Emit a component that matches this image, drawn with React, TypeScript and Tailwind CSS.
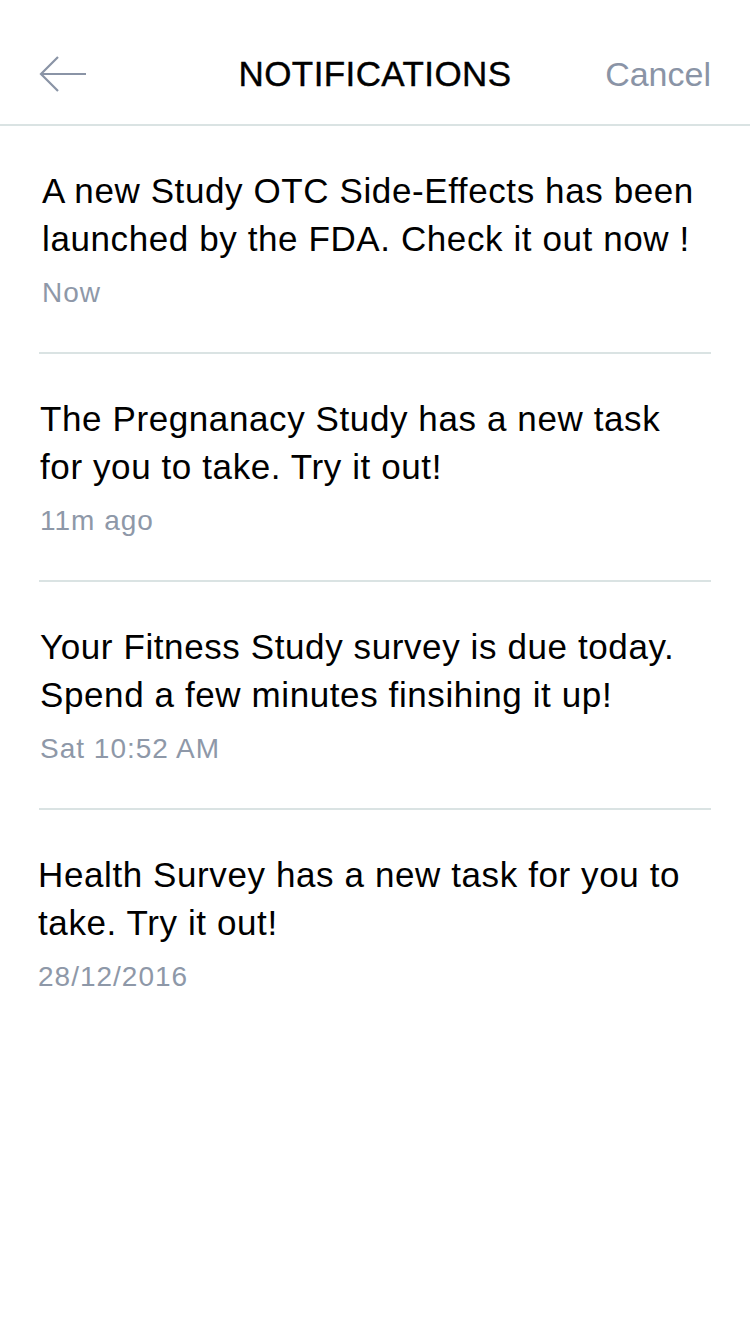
import React from "react";

const items = [
  { text: "A new Study OTC Side-Effects has been launched by the FDA. Check it out now !", time: "Now", pl: "pl-[42px]" },
  { text: "The Pregnanacy Study has a new task for you to take. Try it out!", time: "11m ago", pl: "pl-[40px]" },
  { text: "Your Fitness Study survey is due today. Spend a few minutes finsihing it up!", time: "Sat 10:52 AM", pl: "pl-[40px]" },
  { text: "Health Survey has a new task for you to take. Try it out!", time: "28/12/2016", pl: "pl-[38px]" },
];

export default function App() {
  return (
    <div className="w-[750px] h-[1334px] bg-white" style={{ fontFamily: '"Liberation Sans", Arial, sans-serif' }}>
      <div className="relative h-[126px] border-b-2 border-[#dae3e3] pt-[50px]">
        <div className="flex h-[48px] items-center justify-between px-[39px]">
          <svg width="48" height="38" viewBox="0 0 48 38" fill="none">
            <path d="M47 19H3M19 2L2 19L19 36" stroke="#8a94a6" strokeWidth="2.2" />
          </svg>
          <div className="text-[34px] leading-[48px] text-[#8a94a6]">Cancel</div>
        </div>
        <div className="absolute left-0 right-0 top-[50px] text-center text-[35px] leading-[48px] text-black tracking-[0.4px] [-webkit-text-stroke:0.4px_black]">
          NOTIFICATIONS
        </div>
      </div>
      <div className="px-[39px]">
        {items.map((it, i) => (
          <div key={i} className={i < items.length - 1 ? "border-b-2 border-[#dae3e3]" : ""}>
            <div className={`pt-[41px] pb-[42px] ${it.pl} pr-[10px] -ml-[39px]`}>
              <div className="text-[35px] leading-[48px] text-black tracking-[0.6px]">{it.text}</div>
              <div className="mt-[13px] text-[28px] leading-[34px] text-[#8e98a8] tracking-[1px]">{it.time}</div>
            </div>
          </div>
        ))}
      </div>
    </div>
  );
}
